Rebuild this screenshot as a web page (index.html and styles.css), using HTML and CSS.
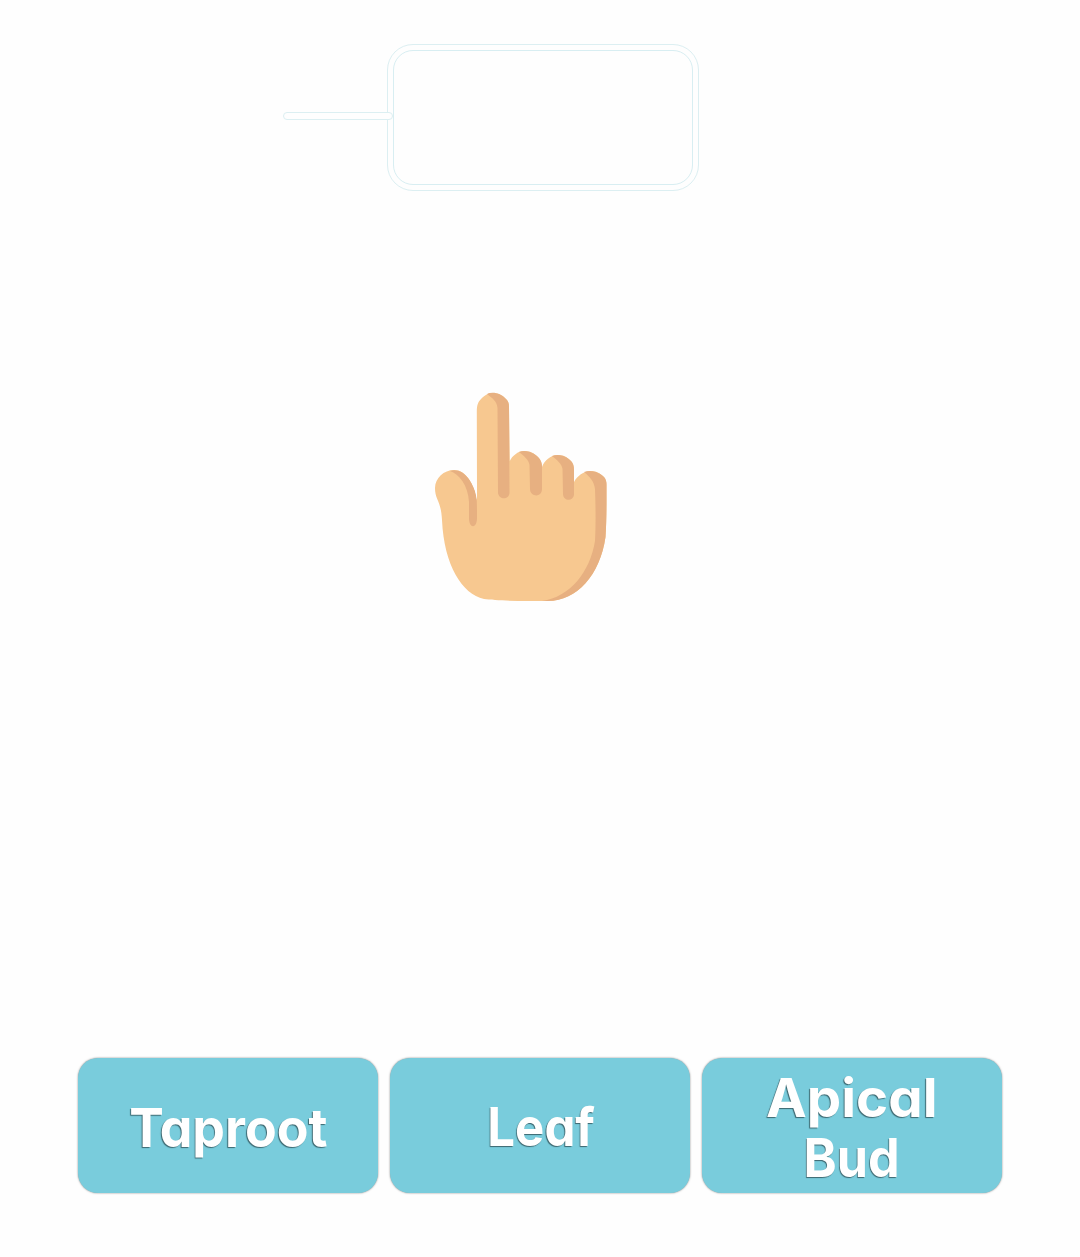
FILE: index.html
```html
<!DOCTYPE html>
<html lang="en">
<head>
<meta charset="utf-8">
<title>Plant parts</title>
<link rel="stylesheet" href="styles.css">
</head>
<body>
<main class="activity">
  <div class="target">
    <span class="pointer-line"></span>
    <div class="drop-frame"><div class="drop-zone"></div></div>
  </div>
  <svg class="hand" width="174" height="210" viewBox="434 392 174 210" aria-hidden="true">
    <path fill="#f7c890" d="M477 498L476.800 411C477 405 478 402 481 399C486 394 489 393 492 393C500 393 503 396 506 399C508 401 509 403 509 407L509.800 461C512 456 518 451 524 451C530 451 534 453 538 457C541 460 542 463 542 467C544 461 551 455 557 455C564 455 567 457 571 461C573 463 574 466 574 470V482C577 476 584 471 590 471C596 471 600 473 604 477C606 479 606.500 482 606.500 485C606.500 498 606.700 520 605.500 537C600 575 577 601 548 601C526 601 496 601 484 599C462 594 444 565 442 520C441 500 435 500 435 488C435 478 444 470 454 470C466 470 473 483 477 499Z"/>
    <g fill="#e7b081">
      <path d="M487 394C493 391 502 394 506 399C508 401 509 403 509 407L509.500 493C509 500 499 500 498 493L497.500 408C497 401 492 398 487 394Z"/>
      <path d="M519 452C526 449 534 453 538 457C541 460 542 463 542 467V489C542 498 530 497 530 489L529.500 465C529 460 524 456 519 452Z"/>
      <path d="M552 456C560 453 567 457 571 461C573 463 574 466 574 470V495C573 502 563 501 563 494L562.500 469C562 464 557 460 552 456Z"/>
      <path d="M584 472C592 469 600 473 604 477C606 479 606.500 482 606.500 485C606.500 498 606.700 520 605.500 537C600 575 577 601 548 601H542C570 597 590 572 595 541C596 523 595.500 504 595 489C594 481 590 477 584 472Z"/>
      <path d="M450 471C463 467 472 481 476 494C477 499 477 506 477 518C477 529 469 529 469 518V502C468 485 459 474 450 471Z"/>
    </g>
    <path fill="#fefefe" d="M474.500 488L477 486V500Z"/>
  </svg>
  <div class="choices">
    <div class="choice"><span class="word word-taproot">Taproot</span></div>
    <div class="choice"><span class="word word-leaf">Leaf</span></div>
    <div class="choice"><span class="word word-apical">Apical</span><span class="word word-bud">Bud</span></div>
  </div>
</main>
</body>
</html>
```
FILE: styles.css
```css
* { box-sizing: border-box; }
body { margin: 0; background: #fefefe; }
.activity {
  width: 1080px;
  height: 1257px;
  padding: 44px 78px 64px;
  display: flex;
  flex-direction: column;
}
.target {
  display: flex;
  align-items: center;
  margin-left: 205px;
}
.pointer-line {
  position: relative;
  z-index: 1;
  width: 110px;
  height: 8px;
  margin: 0 -6px 3px 0;
  border: 1px solid #dceff2;
  border-radius: 4px;
  background: #fefefe;
}
.drop-frame {
  width: 312px;
  height: 147px;
  padding: 5px;
  border: 1px solid #dceff2;
  border-radius: 26px;
}
.drop-zone {
  height: 100%;
  border: 1px solid #d8eef2;
  border-radius: 20px;
}
.hand { margin: 201px 0 0 356px; }
.choices {
  display: grid;
  grid-template-columns: repeat(3, 300px);
  gap: 12px;
  margin-top: auto;
}
.choice {
  height: 135px;
  padding-top: 4px;
  border-radius: 20px;
  background: #79ccdc;
  box-shadow: 0 0 2px rgba(0, 0, 0, .5);
  display: flex;
  flex-direction: column;
  align-items: center;
  justify-content: center;
}
.word {
  font: 700 54px/60px Inter, "Century Gothic", sans-serif;
  font-feature-settings: "cv11" 1;
  color: #fff;
  text-shadow: -1px 1px 1px rgba(0, 0, 0, .5);
  white-space: nowrap;
}
.word-taproot { transform: scaleX(.96); }
.word-leaf { transform: scaleX(.91); margin: 0 -3px 2px 0; }
.word-apical { transform: scaleX(1.012); }
.word-bud { transform: scaleX(.93); }
```
